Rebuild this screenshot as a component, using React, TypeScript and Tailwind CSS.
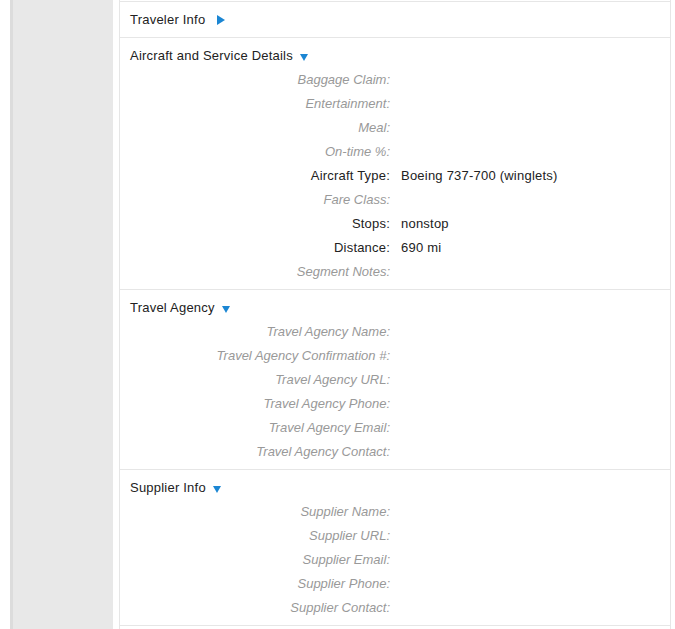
import React from "react";

type Row = { label: string; value?: string };

const RightTri = () => (
  <svg width="8" height="10" viewBox="0 0 8 10" className="ml-[12px] inline-block">
    <path d="M0 0 L8 5 L0 10 Z" fill="#1b86d3" />
  </svg>
);

const DownTri = () => (
  <svg width="8" height="7" viewBox="0 0 8 7" className="ml-[7px] mt-[2px] inline-block">
    <path d="M0 0 L8 0 L4 7 Z" fill="#1b86d3" />
  </svg>
);

function Section({ title, open, rows }: { title: string; open: boolean; rows: Row[] }) {
  return (
    <div className="border-t border-[#e6e6e6] pt-[6px] pb-[5px]">
      <div className="flex h-[24px] items-center pl-[10px] text-[13px] tracking-[0.22px] text-[#222]">
        <span>{title}</span>
        {open ? <DownTri /> : <RightTri />}
      </div>
      {rows.map((r) => (
        <div key={r.label} className="flex h-[24px] items-center text-[13px]">
          <div
            className={
              "w-[270px] shrink-0 text-right " +
              (r.value ? "tracking-[0.2px] text-[#222]" : "italic text-[#999]")
            }
          >
            {r.label}
          </div>
          <div className="pl-[11px] tracking-[0.22px] text-[#222]">{r.value ?? ""}</div>
        </div>
      ))}
    </div>
  );
}

export default function App() {
  return (
    <div
      className="flex h-[629px] w-[675px] overflow-hidden bg-white"
      style={{ fontFamily: '"Liberation Sans", Arial, Helvetica, sans-serif' }}
    >
      <div className="w-[10px] shrink-0 bg-white" />
      <div className="w-[3px] shrink-0 bg-[#dcdcdc]" />
      <div className="w-[100px] shrink-0 bg-[#e8e8e8]" />
      <div className="w-[6px] shrink-0 bg-white" />
      <div className="w-[552px] shrink-0 border-x border-[#e6e6e6] bg-white">
        <div className="h-[1px]" />
        <Section title="Traveler Info" open={false} rows={[]} />
        <Section
          title="Aircraft and Service Details"
          open
          rows={[
            { label: "Baggage Claim:" },
            { label: "Entertainment:" },
            { label: "Meal:" },
            { label: "On-time %:" },
            { label: "Aircraft Type:", value: "Boeing 737-700 (winglets)" },
            { label: "Fare Class:" },
            { label: "Stops:", value: "nonstop" },
            { label: "Distance:", value: "690 mi" },
            { label: "Segment Notes:" },
          ]}
        />
        <Section
          title="Travel Agency"
          open
          rows={[
            { label: "Travel Agency Name:" },
            { label: "Travel Agency Confirmation #:" },
            { label: "Travel Agency URL:" },
            { label: "Travel Agency Phone:" },
            { label: "Travel Agency Email:" },
            { label: "Travel Agency Contact:" },
          ]}
        />
        <Section
          title="Supplier Info"
          open
          rows={[
            { label: "Supplier Name:" },
            { label: "Supplier URL:" },
            { label: "Supplier Email:" },
            { label: "Supplier Phone:" },
            { label: "Supplier Contact:" },
          ]}
        />
        <div className="border-t border-[#e6e6e6]" />
      </div>
    </div>
  );
}
